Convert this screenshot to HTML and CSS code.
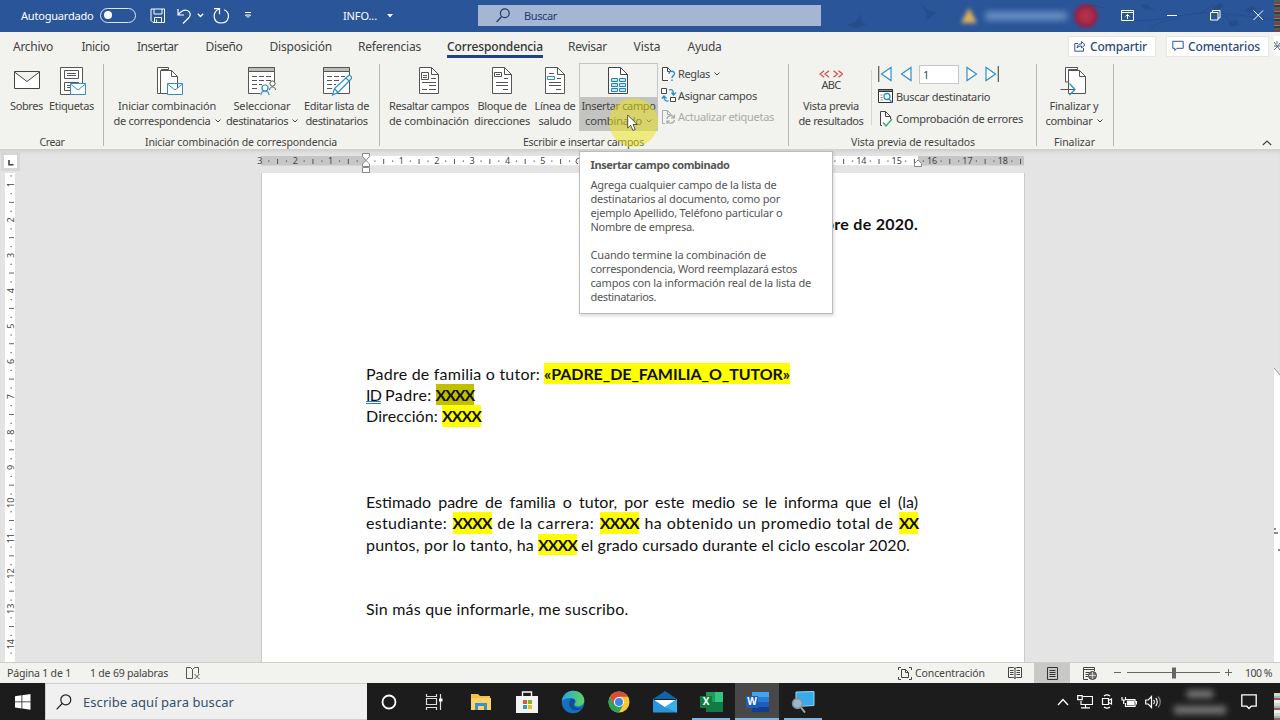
FILE: index.html
```html
<!DOCTYPE html>
<html lang="es">
<head>
<meta charset="utf-8">
<title>INFO - Word</title>
<link rel="stylesheet" href="styles.css">
</head>
<body>
<div class="app">
  <header class="titlebar">
    <div class="quick">
      <span class="t" data-w="72.5">Autoguardado</span>
      <span class="toggle"><i></i></span>
      <svg class="q-save" width="16" height="16" viewBox="0 0 16 16" fill="none" stroke="#fff"><path d="M1 1h13.500v13.500H3L1 12.500zM4 1v5h8V1M4.500 14.500V9.500h7v5M6.500 14v-2.500"/></svg>
      <svg class="q-undo" width="15" height="16" viewBox="0 0 15 16" fill="none" stroke="#fff" stroke-width="1.200"><path d="M1 1v6h6M1.500 6.500C5 2 8 1.500 10.500 2.500c3 1.500 3.500 4.500 1.500 7L6 15.500"/></svg>
      <svg class="q-ch" width="7" height="5" viewBox="0 0 7 5" fill="none" stroke="#fff" stroke-width="1.300"><path d="M.8.8 3.500 3.500 6.200.8"/></svg>
      <svg class="q-redo" width="17" height="16" viewBox="0 0 17 16" fill="none" stroke="#fff" stroke-width="1.200"><path d="M1 .700h5.500v5.500M6.300.8C-1 4-.5 15 8.200 15c8 0 9.800-10 3-13.200"/></svg>
      <svg class="q-more" width="8" height="7" viewBox="0 0 8 7" fill="none" stroke="#fff"><path d="M1 .5h6M1.500 3 4 5.500 6.500 3z"/></svg>
    </div>
    <div class="doc-name"><span class="t" data-w="34">INFO...</span><svg width="6" height="4" viewBox="0 0 6 4"><path d="M0 0h6L3 3.500z" fill="#fff"/></svg></div>
    <div class="search">
      <svg width="14" height="15" viewBox="0 0 14 15" fill="none" stroke="#1f3a6e" stroke-width="1.200"><circle cx="8.800" cy="5.200" r="4.400"/><path d="M5.600 8.500.6 14"/></svg>
      <span class="t" data-w="33">Buscar</span>
    </div>
    <div class="account">
      <svg class="warn" width="16" height="15" viewBox="0 0 16 15"><path d="M8 0l8 15H0z" fill="#e0b35c"/></svg>
      <span class="name"></span>
      <span class="avatar"></span>
    </div>
    <svg class="birds" width="480" height="32" viewBox="0 0 480 32" fill="#1d4279" stroke="#1d4279"><path d="M47 25l8-3 6-8 1 8 5 2-6 3-6 1zM120 3l9 8 9 1-7 5-7 5 3-8z" stroke="none"/><path d="M330 20c30 4 60-12 100-6l46 6M350 30c10-12 20-8 30-12M400 14l14-10M425 15l9 12M345 6l10 5M290 5l15 3" fill="none"/><path d="M412 8l8-5 4 3-7 5zM428 22l9-2 2 5-8 2zM445 10l8-4 4 4-8 4zM340 4l9 1 3 5-8-1z" stroke="none"/></svg>
    <div class="winctl">
      <svg width="14" height="12" viewBox="0 0 14 12" fill="none" stroke="#fff"><path d="M.5.5h12v10H.5zM.5 2.500h12M6.500 9V4.500M4.500 6.500l2-2 2 2"/></svg>
      <svg width="11" height="12" viewBox="0 0 11 12" stroke="#fff"><path d="M0 5.500h10"/></svg>
      <svg width="11" height="11" viewBox="0 0 11 11" fill="none" stroke="#fff"><path d="M.5 2.500h7.500v7.500H.5zM2.500 2.500v-2H10v7.500H8"/></svg>
      <svg width="11" height="11" viewBox="0 0 11 11" fill="none" stroke="#fff"><path d="M.5.5l9.500 9.500M10 .5.5 10"/></svg>
    </div>
    <span class="edge"></span>
  </header>

  <nav class="tabs">
    <span class="t" data-w="40">Archivo</span>
    <span class="t" data-w="28">Inicio</span>
    <span class="t" data-w="41">Insertar</span>
    <span class="t" data-w="37">Diseño</span>
    <span class="t" data-w="62.5">Disposición</span>
    <span class="t" data-w="63">Referencias</span>
    <span class="t on" data-w="96">Correspondencia</span>
    <span class="t" data-w="39">Revisar</span>
    <span class="t" data-w="27">Vista</span>
    <span class="t" data-w="34">Ayuda</span>
    <div class="actions">
      <div class="action share"><svg width="12" height="12" viewBox="0 0 12 12" fill="none" stroke="#2b579a"><path d="M4 3.500H.8v7.700h8.700V8M3 8c.5-3 2-4.200 4.500-4.200V1.500l3.500 3.300L7.500 8V6C5.500 6 4.200 6.500 3 8z"/></svg><span class="t" data-w="57">Compartir</span></div>
      <div class="action comm"><svg width="12" height="12" viewBox="0 0 12 12" fill="none" stroke="#2b579a"><path d="M.8 1.300h10.400v7H5L2.800 10.500V8.300h-2z"/></svg><span class="t" data-w="72">Comentarios</span></div>
      <svg class="gear" width="6" height="20" viewBox="0 0 6 20" fill="none" stroke="#567"><path d="M0 6l6 8M0 14l3-3 3-4M3 5v3M0 10h6"/></svg>
    </div>
  </nav>

  <section class="ribbon">
    <div class="group g-crear">
      <div class="tools">
        <div class="tool">
          <div class="ic"><svg width="28" height="30" viewBox="0 0 28 30" fill="#fff" stroke="#444"><path d="M1.500 5.500h25v17h-25zM1.500 6 14 15.500 26.500 6"/></svg></div>
          <span class="t" data-w="33">Sobres</span>
        </div>
        <div class="tool">
          <div class="ic"><svg width="28" height="30" viewBox="0 0 28 30" fill="#fff" stroke="#555"><path d="M2.500 1.500h22v27h-22z"/><path d="M6.500 4.500h14v8h-14zM6.500 16.500h14v8h-14z"/><path d="M9 7.500h9M9 9.500h9M9 19.500h3M9 21.500h3" /><path d="M12.500 17.500h15v11h-15z" stroke="#2e8fcf"/><path d="M12.500 18l7.500 6 7.500-6" stroke="#2e8fcf"/></svg></div>
          <span class="t" data-w="45">Etiquetas</span>
        </div>
      </div>
      <div class="caption"><span class="t" data-w="25">Crear</span></div>
    </div>

    <div class="group g-iniciar">
      <div class="tools">
        <div class="tool">
          <div class="ic shift"><svg width="28" height="30" viewBox="0 0 28 30" fill="#fff" stroke="#555"><path d="M1.500 27.500v-26h11v2h-7v24z"/><path d="M4.500 4.500h11l6 6v17h-17z"/><path d="M15.500 4.500v6h6" fill="none"/><path d="M11.500 17.500h15v11h-15zM11.500 18l7.500 6 7.500-6" stroke="#2e8fcf"/></svg></div>
          <span class="t" data-w="98">Iniciar combinación</span>
          <span class="row"><span class="t" data-w="97">de correspondencia</span><svg class="chev" width="6" height="4" viewBox="0 0 6 4"><path d="M.5.5 3 3 5.500.5"/></svg></span>
        </div>
        <div class="tool">
          <div class="ic"><svg width="28" height="30" viewBox="0 0 28 30" fill="#fff" stroke="#555"><path d="M.5 1.500h26v26H.5z"/><path d="M.5 1.500h26v4H.5z" fill="#bdbdb5"/><path d="M4 10.500h5M11 10.500h5M18 10.500h5M4 14.500h5M11 14.500h5M18 14.500h5M4 18.500h5M11 18.500h3M4 22.500h5"/><path d="M12 29V19h3l5-3h8v13z" fill="#f2f2ee" stroke="none"/><circle cx="24.500" cy="17.500" r="2.600"/><path d="M21.500 24c0-4 6-4 6 0" fill="none"/><g stroke="#2e8fcf" stroke-width="1.200"><circle cx="17" cy="22" r="3"/><path d="M13 29c0-5 8-5 8 0" fill="none"/></g></svg></div>
          <span class="t" data-w="57">Seleccionar</span>
          <span class="row"><span class="t" data-w="62">destinatarios</span><svg class="chev" width="6" height="4" viewBox="0 0 6 4"><path d="M.5.5 3 3 5.500.5"/></svg></span>
        </div>
        <div class="tool">
          <div class="ic"><svg width="30" height="30" viewBox="0 0 30 30" fill="#fff" stroke="#555"><path d="M1.500 1.500h26v26h-26z"/><path d="M1.500 1.500h26v4h-26z" fill="#bdbdb5"/><path d="M5 10.500h5M12 10.500h5M19 10.500h4M5 14.500h5M12 14.500h5M5 18.500h5M12 18.500h2M5 22.500h5"/><path d="M10.500 29l2-6.500L26 10c2-1.500 4.500 1 3 3L16 26.500zM24 12l3 3M12.500 22.500l3.500 4" stroke="#2e8fcf" stroke-width="1.200"/></svg></div>
          <span class="t" data-w="65">Editar lista de</span>
          <span class="t" data-w="62">destinatarios</span>
        </div>
      </div>
      <div class="caption"><span class="t" data-w="192">Iniciar combinación de correspondencia</span></div>
    </div>

    <div class="group g-escribir">
      <div class="tools">
        <div class="tool">
          <div class="ic"><svg width="20" height="30" viewBox="0 0 20 30" fill="#fff" stroke="#555"><path d="M.5 1.500h12l7 7v19H.5z"/><path d="M12.500 1.500v7h7M3 16.500h14M10 19.500h7M3 23.500h5M10 23.500h7M12 12.500h5" fill="none"/><path d="M2.500 6.500h7v7h-7z"/><path d="M4 9.500h4M4 11.500h4"/></svg></div>
          <span class="t" data-w="80">Resaltar campos</span>
          <span class="t" data-w="80">de combinación</span>
        </div>
        <div class="tool">
          <div class="ic"><svg width="20" height="30" viewBox="0 0 20 30" fill="#fff" stroke="#555"><path d="M.5 1.500h12l7 7v19H.5z"/><path d="M12.500 1.500v7h7M4 16.500h12M4 19.500h12M11 23.500h5M12 12.500h4" fill="none"/><path d="M2.500 6.500h7v4h-7z"/><path d="M4 8.500h4"/></svg></div>
          <span class="t" data-w="49">Bloque de</span>
          <span class="t" data-w="56">direcciones</span>
        </div>
        <div class="tool">
          <div class="ic"><svg width="20" height="30" viewBox="0 0 20 30" fill="#fff" stroke="#555"><path d="M.5 1.500h12l7 7v19H.5z"/><path d="M12.500 1.500v7h7M4 7.500h5M4 16.500h12M4 19.500h12M11 23.500h5M12 12.500h4" fill="none"/><path d="M2.500 10.500h7v3h-7z" stroke="#2e8fcf"/></svg></div>
          <span class="t" data-w="41">Línea de</span>
          <span class="t" data-w="33">saludo</span>
        </div>
        <div class="tool hot">
          <div class="ic"><svg width="20" height="30" viewBox="0 0 20 30" fill="#fff" stroke="#444"><path d="M.5 1.500h12l7 7v19H.5z"/><path d="M12.500 1.500v7h7" fill="none"/><path d="M3.500 12.500h6v3h-6zM11.500 12.500h6v3h-6zM3.500 17.500h6v3h-6zM11.500 17.500h6v3h-6zM3.500 22.500h6v3h-6zM11.500 22.500h6v3h-6z" stroke="#1f86b8" fill="#c4e4f2"/></svg></div>
          <span class="t" data-w="74">Insertar campo</span>
          <span class="row"><span class="t" data-w="57">combinado</span><svg class="chev" width="6" height="4" viewBox="0 0 6 4"><path d="M.5.5 3 3 5.500.5"/></svg></span>
        </div>
        <div class="stack">
          <div class="line"><svg width="16" height="16" viewBox="0 0 16 16" fill="none" stroke="#444"><path d="M7 14.500H1.500V1.500h5l4 4M6.500 1.500v4h3" fill="#fff"/><path d="M8 8c0-4 6-3.500 5.500 0-.3 1.700-2.500 1.700-2.500 4M11 13.500V15" stroke="#2e8fcf" stroke-width="1.400"/></svg><span class="t" data-w="32">Reglas</span><svg class="chev" width="6" height="4" viewBox="0 0 6 4"><path d="M.5.5 3 3 5.500.5"/></svg></div>
          <div class="line"><svg width="16" height="16" viewBox="0 0 16 16" fill="none" stroke="#444"><path d="M.5 1.500h5v5h-5zM9.500 10.500h5v4h-5z" fill="#fff"/><path d="M8 3c3-1 4.500.5 4.500 4M10.500 5.500l2 2.500 2.500-2.500M7.500 14C4.500 14.500 3 13 3 10M.8 11.500 3 9l2.500 2.500" stroke="#2e8fcf" stroke-width="1.300"/></svg><span class="t" data-w="79">Asignar campos</span></div>
          <div class="line off"><svg width="16" height="16" viewBox="0 0 16 16" fill="none" stroke="#aaa"><path d="M4 14.500H1.500V1.500h5l4 4M6.500 1.500v4h3"/><path d="M6 10c.5-4 6-4.500 7-1.500M13.500 5.500v3.300H10M13.500 11c-1 4-6 4-7 1.500M6 15v-3h3" stroke-width="1.200"/></svg><span class="t" data-w="96">Actualizar etiquetas</span></div>
        </div>
      </div>
      <div class="caption"><span class="t" data-w="121">Escribir e insertar campos</span></div>
      <span class="halo"></span>
      <svg class="cursor" width="12" height="18" viewBox="0 0 12 18"><path d="M.7 1v13l3-2.700 2.200 5.200 2.300-1-2.200-5h4.200z" fill="#fff" stroke="#333" stroke-width=".8"/></svg>
    </div>

    <div class="group g-vista">
      <div class="tools">
        <div class="tool">
          <div class="ic abc"><svg width="24" height="8" viewBox="0 0 24 8" fill="none" stroke="#d9534f" stroke-width="1.300"><path d="M5 .8 1 4l4 3.200M10 .8 6 4l4 3.200M14.500.8l4 3.200-4 3.200M19.500.8l4 3.200-4 3.200"/></svg><span class="t" data-w="19">ABC</span></div>
          <span class="t" data-w="56">Vista previa</span>
          <span class="t" data-w="65">de resultados</span>
        </div>
        <div class="stack">
          <div class="nav">
            <svg width="14" height="16" viewBox="0 0 14 16" fill="#fff" stroke="#2e8fcf" stroke-width="1.200"><path d="M13 1.500v13L3.500 8z"/><path d="M.7 0v16" stroke="#555"/></svg>
            <svg width="12" height="16" viewBox="0 0 12 16" fill="#fff" stroke="#2e8fcf" stroke-width="1.200"><path d="M11 1.500v13L1.500 8z"/></svg>
            <span class="field">1</span>
            <svg width="12" height="16" viewBox="0 0 12 16" fill="#fff" stroke="#2e8fcf" stroke-width="1.200"><path d="M1 1.500v13L10.500 8z"/></svg>
            <svg width="14" height="16" viewBox="0 0 14 16" fill="#fff" stroke="#2e8fcf" stroke-width="1.200"><path d="M1 1.500v13L10.500 8z"/><path d="M13.300 0v16" stroke="#555"/></svg>
          </div>
          <div class="line"><svg width="16" height="16" viewBox="0 0 16 16" fill="none" stroke="#333"><path d="M.5 1.500h14v13H.5z" fill="#fff"/><path d="M.5 1.500h14v2H.5z" fill="#888"/><path d="M2.500 7h2M2.500 9.500h2M2.500 12h2" stroke="#888"/><circle cx="9" cy="8.500" r="3" fill="#fff" stroke="#2e8fcf" stroke-width="1.300"/><path d="M11 11l3 3.500" stroke="#2e8fcf" stroke-width="1.300"/></svg><span class="t" data-w="94">Buscar destinatario</span></div>
          <div class="line"><svg width="16" height="16" viewBox="0 0 16 16" fill="none" stroke="#444"><path d="M4 14.500H2.500V.5h5l5 5V8M7.500.5v5h5" fill="#fff"/><path d="M5 11.500l3 3.500 6-7" stroke="#3fa66a" stroke-width="1.300"/></svg><span class="t" data-w="127">Comprobación de errores</span></div>
        </div>
      </div>
      <div class="caption"><span class="t" data-w="124">Vista previa de resultados</span></div>
    </div>

    <div class="group g-fin">
      <div class="tools">
        <div class="tool">
          <div class="ic"><svg width="28" height="30" viewBox="0 0 28 30" fill="#fff" stroke="#555"><path d="M5.500 16V1.500h12v2h-9V16z"/><path d="M8.500 27.500v-23h11l6 6v17z"/><path d="M19.500 4.500v6h6" fill="none"/><path d="M.5 23.500h14" /><path d="M9.500 17.500l5.500 6-5.500 5.500" fill="none" stroke="#2e8fcf" stroke-width="1.300"/></svg></div>
          <span class="t" data-w="49">Finalizar y</span>
          <span class="row"><span class="t" data-w="47">combinar</span><svg class="chev" width="6" height="4" viewBox="0 0 6 4"><path d="M.5.5 3 3 5.500.5"/></svg></span>
        </div>
      </div>
      <div class="caption"><span class="t" data-w="41">Finalizar</span></div>
    </div>
    <svg class="collapse" width="10" height="6" viewBox="0 0 10 6" fill="none" stroke="#444" stroke-width="1.200"><path d="M.8 5 5 1l4.200 4"/></svg>
  </section>

  <main class="work">
    <aside class="left">
      <div class="tabstop"><svg width="14" height="14" viewBox="0 0 14 14" fill="none" stroke="#444" stroke-width="1.600"><path d="M5 5v4.700h4.500"/></svg></div>
      <svg class="vruler" id="vruler" width="10" height="489"></svg>
    </aside>
    <div class="desk">
      <svg class="hruler" id="hruler" width="776" height="23"></svg>
      <article class="page">
        <p class="right"><b class="t" data-w="93">bre de 2020.</b></p>
        <p class="b6"><span class="t" data-w="174">Padre de familia o tutor:</span><mark class="t" data-w="246">«PADRE_DE_FAMILIA_O_TUTOR»</mark></p>
        <p><span><span class="t gram" data-w="15">ID</span> <span class="t" data-w="46.5">Padre:</span></span><mark class="t sel" data-w="38.5">XXXX</mark></p>
        <p><span class="t" data-w="72">Dirección:</span><mark class="t" data-w="39">XXXX</mark></p>
        <p class="b3 full">Estimado padre de familia o tutor, por este medio se le informa que el (la)</p>
        <p class="spread"><span class="t" data-w="81">estudiante:</span><mark class="t" data-w="39">XXXX</mark><span class="t" data-w="97">de la carrera:</span><mark class="t" data-w="39">XXXX</mark><span class="t" data-w="249">ha obtenido un promedio total de</span><mark class="t" data-w="19">XX</mark></p>
        <p><span class="t" data-w="168">puntos, por lo tanto, ha</span><mark class="t" data-w="39">XXXX</mark><span class="t" data-w="329">el grado cursado durante el ciclo escolar 2020.</span></p>
        <p class="b2"><span class="t" data-w="262.5">Sin más que informarle, me suscribo.</span></p>
      </article>
    </div>
    <svg class="sliver" width="6" height="294" viewBox="0 0 6 294"><path d="M0 0l6 7v287H0z" fill="#fff"/><path d="M0 0l6 7" stroke="#999"/><path d="M0 161h2M0 165h4M4 182h3" stroke="#567" stroke-width="1.500"/></svg>
    <div class="tip">
      <b class="t" data-w="139">Insertar campo combinado</b>
      <div class="tip-body">
        <span class="t" data-w="186">Agrega cualquier campo de la lista de</span>
        <span class="t" data-w="189.5">destinatarios al documento, como por</span>
        <span class="t" data-w="192">ejemplo Apellido, Teléfono particular o</span>
        <span class="t" data-w="104">Nombre de empresa.</span>
      </div>
      <div class="tip-body second">
        <span class="t" data-w="175.5">Cuando termine la combinación de</span>
        <span class="t" data-w="206.500">correspondencia, Word reemplazará estos</span>
        <span class="t" data-w="220.500">campos con la información real de la lista de</span>
        <span class="t" data-w="65.5">destinatarios.</span>
      </div>
    </div>
  </main>

  <footer class="status">
    <span class="t" data-w="64">Página 1 de 1</span>
    <span class="t words" data-w="78">1 de 69 palabras</span>
    <svg width="15" height="13" viewBox="0 0 15 13" fill="none" stroke="#555"><path d="M6.500 11.500H.5V.5h4l2 2 2-2h4v6M6.500 2.500v9M8.500 7l5 5M13.500 7l-5 5"/></svg>
    <div class="views">
      <svg width="14" height="13" viewBox="0 0 14 13" fill="none" stroke="#444"><path d="M3 .5H.5V3M11 .5h2.500V3M3 12.500H.5V10M11 12.500h2.500V10M3.500 2.500h4l3 3v5h-7zM7.500 2.500v3h3"/></svg>
      <span class="t focus" data-w="70">Concentración</span>
      <svg class="v-read" width="14" height="12" viewBox="0 0 14 12" fill="none" stroke="#444"><path d="M.5.5h5l1.500 1 1.500-1h5v10h-5L7 11.500l-1.500-1h-5zM7 1.500v10M2 3.500h3.500M2 5.500h3.500M2 7.500h3.500M8.500 3.500H12M8.500 5.500H12M8.500 7.500H12"/></svg>
      <span class="v-print"><svg width="11" height="13" viewBox="0 0 11 13" fill="none" stroke="#333"><path d="M.5.5h10v12H.5zM2.500 3.500h6M2.500 5.500h6M2.500 7.500h6M2.500 9.500h6"/></svg></span>
      <svg class="v-web" width="14" height="13" viewBox="0 0 14 13" fill="none" stroke="#444"><path d="M5 12.500H.5V.5h11V4M.5 2.500h11M2.500 5.500h4M2.500 7.500h3M2.500 9.500h3"/><circle cx="9.500" cy="8.500" r="4" fill="#777"/><path d="M6 8.500h7M9.500 5v7" stroke="#eee" stroke-width=".7"/></svg>
      <svg class="zoom" width="119" height="12" viewBox="0 0 119 12" stroke="#666"><path d="M0 5.500h7M13 5.500h93M111 5.500h7M114.500 2v7"/><path d="M58 .5h4v11h-4z" fill="#666" stroke="none"/></svg>
      <span class="t pct" data-w="27">100 %</span>
    </div>
  </footer>

  <footer class="taskbar">
    <div class="start"><svg width="16" height="16" viewBox="0 0 16 16" fill="#fff"><path d="M0 2.200l6.500-.9v6.200H0zM7.300 1.200 15.500 0v7.500H7.300zM0 8.300h6.500v6.200L0 13.600zM7.300 8.300h8.200v7.500L7.300 14.600z"/></svg></div>
    <div class="tsearch"><svg width="16" height="16" viewBox="0 0 16 16" fill="none" stroke="#222" stroke-width="1.200"><circle cx="9.800" cy="5.800" r="5"/><path d="M6.200 9.500.6 15.300"/></svg><span class="t" data-w="151">Escribe aquí para buscar</span></div>
    <div class="apps">
      <span class="app-i"><svg width="16" height="16" viewBox="0 0 16 16"><circle cx="8" cy="8" r="6.500" fill="none" stroke="#fff" stroke-width="1.800"/></svg></span>
      <span class="app-i"><svg width="18" height="16" viewBox="0 0 18 16" fill="none" stroke="#ddd" stroke-width="1.200"><path d="M1.500 0v2.500h10V0M1.500 4.500h10v6h-10zM1.500 16v-2.500h10V16M15.500 0v16"/><path d="M14 4.500h3.500v3H14z" fill="#fff" stroke="none"/></svg></span>
      <span class="app-i"><svg width="22" height="18" viewBox="0 0 22 18"><path d="M1 1h7l2 2h10v14H1z" fill="#f5c04a"/><path d="M1 5h20v12H1z" fill="#fbd469"/><path d="M5 17v-7h12v7h-3v-4H8v4z" fill="#3e8fcb"/></svg></span>
      <span class="app-i"><svg width="22" height="24" viewBox="0 0 22 24"><path d="M6.500 7V2h9v5" fill="none" stroke="#fff" stroke-width="1.400"/><path d="M0 6h22v17H0z" fill="#f4f4f4"/><path d="M7 10h4v4H7z" fill="#e8562a"/><path d="M12 10h4v4h-4z" fill="#7db928"/><path d="M7 15h4v4H7z" fill="#2aa0da"/><path d="M12 15h4v4h-4z" fill="#f6b91f"/></svg></span>
      <span class="app-i"><svg width="24" height="24" viewBox="0 0 24 24"><defs><linearGradient id="eg" x1="0" x2="1"><stop offset="0" stop-color="#27a6de"/><stop offset="1" stop-color="#62d35c"/></linearGradient></defs><circle cx="12" cy="12" r="11.300" fill="#1670c2"/><path d="M.8 11C2 4 7 .7 12 .7c7 0 11.300 5 11.300 9.500 0 4.300-3.500 6-6.300 6-3 0-4.200-1.500-3-2.700 1.500-2 .5-5.500-4-5.500C5 8 2 9.500.8 11z" fill="url(#eg)"/><path d="M9 10c-3 6 2 12 9 9.800 2-.6 3-2 3.700-2.800-3 1.500-8 1.800-9-1.500-.7-2 1.800-3 1.300-4.500C13.500 9 10.500 8 9 10z" fill="#104b93"/></svg></span>
      <span class="app-i"><svg width="22" height="22" viewBox="0 0 22 22"><circle cx="11" cy="11" r="10.500" fill="#f7c92f"/><path d="M1.900 5.750A10.500 10.500 0 0 1 20.100 5.750H11L6.500 13.600z" fill="#dd4b3e"/><path d="M1.900 5.750A10.500 10.500 0 0 0 11 21.500l4.500-7.900-9 0z" fill="#2fa254"/><circle cx="11" cy="11" r="5" fill="#fff"/><circle cx="11" cy="11" r="4" fill="#4184ea"/></svg></span>
      <span class="app-i"><svg width="24" height="22" viewBox="0 0 24 22"><path d="M0 8 12 0l12 8z" fill="#1264a8"/><path d="M2 9h20v8H2z" fill="#fff"/><path d="M0 8l12 8L24 8v13.500H0z" fill="#2a95dc"/><path d="M2 9.300h20L12 16z" fill="#fff"/><path d="M12 16 24 8v13.500z" fill="#36b0ea"/></svg></span>
      <span class="app-i run excel"><svg width="23" height="20" viewBox="0 0 23 20"><path d="M6 0h17v20H6z" fill="#1f9b5c"/><path d="M15 0h8v10h-8z" fill="#33c481"/><path d="M6 10h17v10H6z" fill="#127a43"/><path d="M0 4h12v12H0z" fill="#107c41"/></svg><i>X</i></span>
      <span class="app-i run word"><svg width="23" height="20" viewBox="0 0 23 20"><path d="M6 0h17v20H6z" fill="#2b7cd3"/><path d="M6 0h17v5H6z" fill="#41a5ee"/><path d="M6 10h17v5H6z" fill="#1a5dbe"/><path d="M6 15h17v5H6z" fill="#123f8f"/><path d="M0 4h12v12H0z" fill="#1a5dbe"/></svg><i>W</i></span>
      <span class="app-i run"><svg width="24" height="22" viewBox="0 0 24 22"><path d="M5 1l18-.500v14L5 15.500z" fill="#39a9ee" stroke="#9ad2f2"/><circle cx="6.500" cy="12.500" r="5" fill="#9bb7c9" stroke="#7c8f9b" stroke-width="1.400"/><path d="M10 16.500l4 5" stroke="#aaa" stroke-width="2"/></svg></span>
    </div>
    <div class="tray">
      <svg width="12" height="8" viewBox="0 0 12 8" fill="none" stroke="#fff" stroke-width="1.300"><path d="M1 7l5-5.500L11 7"/></svg>
      <svg width="16" height="14" viewBox="0 0 16 14" fill="none" stroke="#fff" stroke-width="1.200"><path d="M6 1.500h9.500v8H4V6M4 12.800h9M8.500 9.500v3"/><path d="M.7.7h4.500v4H.7z"/></svg>
      <svg width="12" height="15" viewBox="0 0 12 15" fill="none" stroke="#fff" stroke-width="1.200"><path d="M1.500 4.500h6v6h-6zM7.500 6.500l3-1.500v5l-3-1.500M3 2c2-1.500 4-1.500 6 0M3 13c2 1.500 4 1.500 6 0"/></svg>
      <svg width="16" height="12" viewBox="0 0 16 12" fill="none" stroke="#fff" stroke-width="1.200"><path d="M5 3.500h9v7H4.500V7"/><path d="M6.500 5h6v4h-6z" fill="#fff"/><path d="M14 5.500h1.500v3M1 1v3h3.500V1M2.700 4v4"/></svg>
      <svg width="16" height="14" viewBox="0 0 16 14" fill="none" stroke="#fff" stroke-width="1.200"><path d="M.7 5h2.500L6.500 1.500v11L3.200 9H.7zM8.500 5c1 1 1 3 0 4M10.700 3c2 2 2 6 0 8"/><path d="M13 1.500c3 3 3 8 0 11" stroke="#888"/></svg>
      <span class="clock"><i></i><i></i></span>
      <svg width="16" height="16" viewBox="0 0 16 16" fill="none" stroke="#fff" stroke-width="1.300"><path d="M.8.8h14.400v11.400h-5L8 14.500l-2.200-2.300h-5z"/></svg>
    </div>
    <span class="edge low"></span>
  </footer>
</div>
<script src="app.js"></script>
</body>
</html>
```

FILE: styles.css
```css
* { box-sizing: border-box; }
body { margin: 0; font-family: "Noto Sans", "Open Sans", sans-serif; font-size: 11px; color: #444; }
svg { display: block; flex: none; }
p { margin: 0; }
.t { display: inline-block; white-space: nowrap; flex: none; }
.app { width: 1280px; height: 720px; display: flex; flex-direction: column; overflow: hidden; background: #f2f2ee; }

/* title bar */
.titlebar { height: 32px; flex: none; background: #2a5699; color: #fff; display: flex; align-items: center; position: relative; padding-bottom: 1px; }
.quick { width: 343px; padding-left: 21px; display: flex; align-items: center; flex: none; }
.toggle { width: 36px; height: 15px; margin-left: 6px; border: 1.5px solid #dfe6f2; border-radius: 8px; padding: 2px 3px; }
.toggle i { display: block; width: 8px; height: 8px; border-radius: 50%; background: #fff; }
.q-save { margin-left: 14px; }
.q-undo { margin-left: 11px; }
.q-ch { margin-left: 5px; }
.q-redo { margin-left: 9px; }
.q-more { margin-left: 14px; }
.doc-name { width: 135px; display: flex; align-items: center; gap: 10px; flex: none; }
.search { width: 343px; height: 21px; flex: none; background: #a4b6d4; color: #1f3a6e; display: flex; align-items: center; gap: 14px; padding-left: 18px; }
.account { width: 300px; padding-left: 140px; display: flex; align-items: center; flex: none; z-index: 1; }
.warn { filter: blur(2px); }
.name { width: 82px; height: 8px; margin-left: 8px; background: #6f93c7; border-radius: 4px; filter: blur(3px); }
.avatar { width: 24px; height: 24px; margin-left: 7px; border-radius: 50%; background: radial-gradient(#b8304a 20%, #8f2448 60%); filter: blur(1.5px); }
.birds { position: absolute; left: 800px; top: 0; opacity: .4; }
.winctl { display: flex; align-items: center; gap: 32px; z-index: 1; }
.edge { position: absolute; right: 0; top: 0; width: 6px; height: 32px; background: repeating-linear-gradient(#4b6340 0 2px, #7a3d5c 2px 4px, #8d7f4c 4px 5px, #333a55 5px 7px); }
.edge.low { top: 10px; height: 27px; background: repeating-linear-gradient(#cdb 0 3px, #9bc 3px 5px, #a56 5px 7px, #eee 7px 10px); }

/* tabs */
.tabs { height: 28px; flex: none; padding-left: 13px; display: flex; align-items: center; gap: 27px; font-size: 12px; }
.tabs > .t:nth-child(2) { margin-left: 1.5px; }
.tabs > .t:nth-child(3) { margin-left: .5px; }
.tabs > .t:nth-child(4) { margin-left: .5px; }
.tabs > .t:nth-child(6) { margin-left: -1px; }
.tabs > .t:nth-child(7) { margin-left: -1px; }
.tabs > .t:nth-child(8) { margin-left: -2px; }
.tabs > .t:nth-child(9) { margin-left: -.5px; }
.tabs .on { font-weight: 500; color: #333; position: relative; }
.tabs .on::after { content: ""; position: absolute; left: 0; right: 0; bottom: -3px; height: 3px; background: #1e4480; }
.actions { margin-left: auto; display: flex; gap: 10px; align-items: center; height: 28px; color: #2b4a80; font-weight: 500; }
.action { height: 21px; background: #fff; border: 1px solid #e6e6e2; display: flex; align-items: center; gap: 4px; padding-left: 5px; }
.share { width: 88px; }
.comm { width: 103px; }
.gear { margin-left: -5px; background: #fff; }

/* ribbon */
.ribbon { height: 90px; flex: none; display: flex; border-bottom: 1px solid #d0d0cc; position: relative; z-index: 2; }
.group { display: flex; flex-direction: column; position: relative; flex: none; }
.group::after { content: ""; position: absolute; right: 0; top: 4px; width: 1px; height: 82px; background: #b5b5b1; }
.g-crear { width: 104px; }
.g-iniciar { width: 276px; }
.g-escribir { width: 409px; }
.g-vista { width: 248px; }
.g-fin { width: 77px; }
.tools { height: 74px; display: flex; padding-top: 3px; }
.tool { display: flex; flex-direction: column; align-items: center; flex: none; height: 68px; line-height: 15px; padding-top: 3px; }
.tool .ic { height: 32px; }
.tool .t { height: 15px; }
.tool .row { display: flex; align-items: center; gap: 4px; }
.chev { fill: none; stroke: #444; }
.caption { height: 16px; line-height: 16px; padding-top: 1px; display: flex; justify-content: center; font-size: 10.5px; }
.g-crear .tools { padding-left: 5px; }
.g-crear .tool:nth-child(1) { width: 43px; }
.g-crear .tool:nth-child(2) { width: 47px; }
.g-iniciar .tools { padding-left: 7px; }
.g-iniciar .tool:nth-child(1) { width: 112px; }
.g-iniciar .tool:nth-child(2) { width: 78px; }
.g-iniciar .tool:nth-child(3) { width: 71px; }
.ic.shift { padding-left: 5px; }
.g-escribir .tools { padding-left: 5px; }
.g-escribir .tool:nth-child(1) { width: 88px; }
.g-escribir .tool:nth-child(2) { width: 58px; }
.g-escribir .tool:nth-child(3) { width: 48px; }
.g-escribir .tool.hot { width: 79px; border: 1px solid #c4c4c0; border-bottom: 0; padding-top: 2px; background: linear-gradient(#f2f2ee 33px, #c3c3c1 33px); }
.hot .ic { padding-right: 2px; }
.g-escribir .caption, .g-iniciar .caption { padding-right: 2px; }
.stack { display: flex; flex-direction: column; }
.line { display: flex; align-items: center; height: 21.6px; }
.line.off { color: #aaa; }
.g-escribir .stack { padding-left: 3px; }
.g-escribir .line svg:first-child { margin-right: 1px; }
.g-escribir .line .chev { margin-left: 4px; }
.halo { position: absolute; left: 229px; top: 38px; width: 49px; height: 49px; border-radius: 50%; background: rgba(238, 228, 20, .5); }
.cursor { position: absolute; left: 247px; top: 54px; }
.g-vista .tools { padding-left: 2px; }
.g-vista .tool { width: 80px; }
.abc { display: flex; flex-direction: column; align-items: center; padding-top: 4px; line-height: 13px; }
.g-vista .stack { padding-left: 7px; position: relative; }
.g-vista .stack::before { content: ""; position: absolute; left: 0; top: 7px; width: 1px; height: 55px; background: #d4d4d0; }
.nav { display: flex; align-items: center; height: 22px; }
.nav svg:nth-child(2) { margin-left: 8px; }
.nav svg:nth-child(4) { margin-left: 7px; }
.nav svg:nth-child(5) { margin-left: 7px; }
.field { width: 40px; height: 19px; margin-left: 7px; background: #fff; border: 1px solid #c6c6c6; padding-left: 3px; line-height: 17px; color: #2c5a3a; }
.g-vista .line { gap: 2px; height: 22.6px; }
.g-fin .tools { padding-left: 6px; }
.g-fin .tool { width: 62px; }
.g-fin .caption { padding-right: 2px; }
.collapse { position: absolute; right: 8px; bottom: 3px; }

/* workspace */
.work { height: 512px; flex: none; background: #e4e4e4; display: flex; position: relative; z-index: 3; box-shadow: inset 0 4px 4px -3px #c9c9c9; }
.left { width: 254px; flex: none; padding-left: 5px; }
.tabstop { width: 13px; height: 13px; margin: 5px 0 5px -1px; background: #fff; outline: 3px solid #d6d6d6; }
.vruler { background: #fff; }
.desk { width: 776px; flex: none; display: flex; flex-direction: column; }
.page { width: 764px; margin-left: 7px; flex: 1; background: #fff; border: solid #cacaca; border-width: 0 1px; padding: 40.4px 106px 0 104px; font-family: Lato, sans-serif; font-size: 16px; line-height: 21.37px; color: #111; overflow: hidden; }
.page p { display: flex; gap: 4px; height: 21.37px; white-space: nowrap; }
.page .right { justify-content: flex-end; }
.page .b6 { margin-top: 128px; }
.page .b3 { margin-top: 64.1px; }
.page .b2 { margin-top: 42.7px; }
.page .full { display: block; text-align: justify; text-align-last: justify; }
.page .spread { justify-content: space-between; gap: 0; }
.page mark { background: #ff0; color: #111; font-weight: 700; }
.page .sel { background: #c0c000; }
.gram { height: 20px; line-height: 21.37px; border-bottom: 3px double #2f7fd0; }
.sliver { position: absolute; left: 1274px; top: 218px; }

/* tooltip */
.tip { position: absolute; left: 579px; top: 1px; width: 254px; height: 163px; background: #fff; border: 1px solid #bcbcbc; box-shadow: 1px 2px 3px rgba(0, 0, 0, .15); padding: 5px 10.5px; color: #555; line-height: 14px; }
.tip > b { display: block; line-height: 16px; }
.tip-body { display: flex; flex-direction: column; margin-top: 5px; }
.tip-body.second { margin-top: 14px; }

/* status bar */
.status { height: 21px; flex: none; border-top: 1px solid #cfcfca; padding-left: 7px; display: flex; align-items: center; font-size: 10.5px; position: relative; z-index: 4; background: #f2f2ee; }
.words { margin: 0 18px 0 19px; }
.views { margin-left: auto; width: 382px; display: flex; align-items: center; height: 20px; }
.focus { margin-left: 3px; }
.v-read { margin-left: 23px; }
.v-print { width: 36px; height: 20px; margin-left: 12px; background: #c8c8c6; display: flex; align-items: center; justify-content: center; flex: none; }
.v-web { margin-left: 13px; }
.zoom { margin-left: 17px; }
.pct { margin-left: 12px; }

/* taskbar */
.taskbar { height: 37px; flex: none; background: #1c1c1c; display: flex; position: relative; z-index: 4; }
.start { width: 45px; display: flex; align-items: center; justify-content: center; flex: none; }
.tsearch { width: 322px; flex: none; background: #f0f0f0; border: 1px solid #cfcfcf; border-right: 0; display: flex; align-items: center; gap: 11px; padding-left: 10px; font-size: 13px; color: #33506b; }
.apps { display: flex; flex: none; margin-left: -1px; }
.app-i { width: 46px; display: flex; align-items: center; justify-content: center; position: relative; }
.app-i:nth-child(2) svg { margin-left: -2px; }
.run::after { content: ""; position: absolute; left: 4px; right: 4px; bottom: 0; height: 2px; background: #76b9ed; }
.run i { position: absolute; left: 13px; top: 12px; width: 10px; text-align: center; color: #fff; font: 700 10px/13px "Open Sans", sans-serif; }
.word { background: linear-gradient(90deg, transparent 1px, #484848 1px 45px, transparent 45px); }
.word::after { left: 1px; right: 1px; }
.tray { position: absolute; left: 1057px; top: 0; height: 37px; display: flex; align-items: center; gap: 8px; }
.clock { width: 58px; height: 30px; display: flex; flex-direction: column; align-items: center; justify-content: space-between; padding: 3px 0; margin: 0 4px 0 2px; }
.clock i { display: block; width: 26px; height: 8px; background: #777; filter: blur(3px); }
.clock i + i { width: 52px; }
```

FILE: app.js
```js
// Fit each label to its box by spreading the difference over its letters.
document.querySelectorAll('.t').forEach(function (el) {
  var w = parseFloat(el.dataset.w);
  var range = document.createRange();
  range.selectNodeContents(el);
  var natural = range.getBoundingClientRect().width;
  el.style.letterSpacing = ((w - natural) / el.textContent.length).toFixed(3) + 'px';
  el.style.width = w + 'px';
});

var FONT = 'font-family="Noto Sans, sans-serif" font-size="9" fill="#444" text-anchor="middle"';

// Horizontal ruler: origin 112px from the drawing's left edge, one unit per centimetre.
// The stretch from 6.2 to 13.2 cm lies under the open tooltip and is left blank.
(function () {
  var o = 112, u = 35.38, s = '';
  s += '<rect x="7" y="6" width="763" height="9.500" fill="#c6c6c6"/><rect x="112" y="6" width="552" height="9.500" fill="#fff"/>';
  for (var q = -12; q <= 74; q++) {
    var x = o + q * u / 4;
    if (q === 0 || (q > 24 && q < 53)) continue;
    if (q % 4 === 0 && q !== 24) s += '<text x="' + x + '" y="14" ' + FONT + '>' + Math.abs(q / 4) + '</text>';
    else if (q === 24) s += '<path d="M325 8q-3 .5-3 3.500 0 2 2 2.300" fill="none" stroke="#555"/>';
    else if (q % 2 === 0) s += '<rect x="' + (x - .5) + '" y="9" width="1" height="5" fill="#555"/>';
    else s += '<rect x="' + (x - .5) + '" y="10.500" width="1.200" height="1.200" fill="#555"/>';
  }
  s += '<g fill="#fff" stroke="#888"><path d="M108.500 3.500h7v3l-3.500 4-3.500-4zM108.500 16.500v-2.500l3.500-3.500 3.500 3.500v2.500zM108.500 17.500h7v5h-7zM660.500 16.500v-3l3.500-3.500 3.500 3.500v3z"/></g>';
  document.getElementById('hruler').innerHTML = s;
})();

// Vertical ruler, same scale; numbers read bottom to top.
(function () {
  var o = -23.7, u = 35.35, s = '';
  for (var q = 3; q <= 57; q++) {
    var y = o + q * u / 4;
    if (q % 4 === 0) s += '<text transform="translate(9 ' + y + ') rotate(-90)" ' + FONT + '>' + q / 4 + '</text>';
    else if (q % 2 === 0) s += '<rect x="4" y="' + (y - .5) + '" width="5" height="1" fill="#666"/>';
    else s += '<rect x="5.500" y="' + (y - .5) + '" width="1.200" height="1.200" fill="#555"/>';
  }
  document.getElementById('vruler').innerHTML = s;
})();
```
